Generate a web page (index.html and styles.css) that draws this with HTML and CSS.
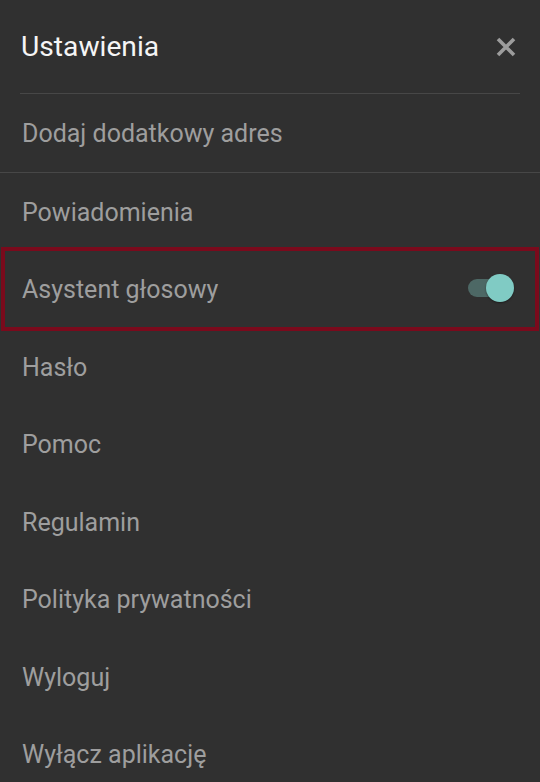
FILE: index.html
```html
<!DOCTYPE html>
<html lang="pl">
<head>
<meta charset="utf-8">
<title>Ustawienia</title>
<link rel="stylesheet" href="styles.css">
</head>
<body>
<div class="panel">
  <header class="header">
    <h1 class="title">Ustawienia</h1>
    <button class="close" aria-label="Zamknij">
      <svg width="20" height="20" viewBox="0 0 20 20"><path d="M2 2 L18 18 M18 2 L2 18" stroke="#9c9c9c" stroke-width="3.6" stroke-linecap="butt"/></svg>
    </button>
  </header>
  <div class="divider inset"></div>
  <div class="row">Dodaj dodatkowy adres</div>
  <div class="divider"></div>
  <div class="row">Powiadomienia</div>
  <div class="row highlighted">
    <span class="label">Asystent głosowy</span>
    <span class="switch"><span class="track"></span><span class="knob"></span></span>
  </div>
  <div class="row">Hasło</div>
  <div class="row">Pomoc</div>
  <div class="row">Regulamin</div>
  <div class="row">Polityka prywatności</div>
  <div class="row">Wyloguj</div>
  <div class="row">Wyłącz aplikację</div>
</div>
</body>
</html>
```

FILE: styles.css
```css
* { box-sizing: border-box; }
html, body { margin: 0; padding: 0; background: #303030; }
body { font-family: Roboto, "Noto Sans", sans-serif; width: 540px; height: 782px; overflow: hidden; }
.panel { display: flex; flex-direction: column; }
.header { height: 93px; display: flex; align-items: center; justify-content: space-between; padding: 0 24px 0 21px; }
.title { margin: 0; font-weight: 400; font-size: 28.2px; color: #f5f5f5; }
.close { background: none; border: 0; padding: 0; width: 20px; height: 20px; display: flex; }
.divider { height: 1px; background: #474747; flex: none; }
.divider.inset { margin: 0 20px; }
.row { height: 77.5px; flex: none; display: flex; align-items: center; justify-content: space-between; padding: 2px 26px 0 22px; font-size: 25px; color: #9e9e9e; position: relative; }
.highlighted::after { content: ""; position: absolute; top: -3px; bottom: -3px; left: 1px; right: 1px; border: 4px solid #7a0a1c; pointer-events: none; }
.switch { position: relative; width: 46px; height: 28px; display: flex; align-items: center; margin-top: -3px; }
.track { width: 36px; height: 18px; border-radius: 9px; background: #4d6865; }
.knob { position: absolute; right: 0; top: 0; width: 28px; height: 28px; border-radius: 50%; background: #80cbc4; box-shadow: 0 1px 2px rgba(0,0,0,0.4); }
```
